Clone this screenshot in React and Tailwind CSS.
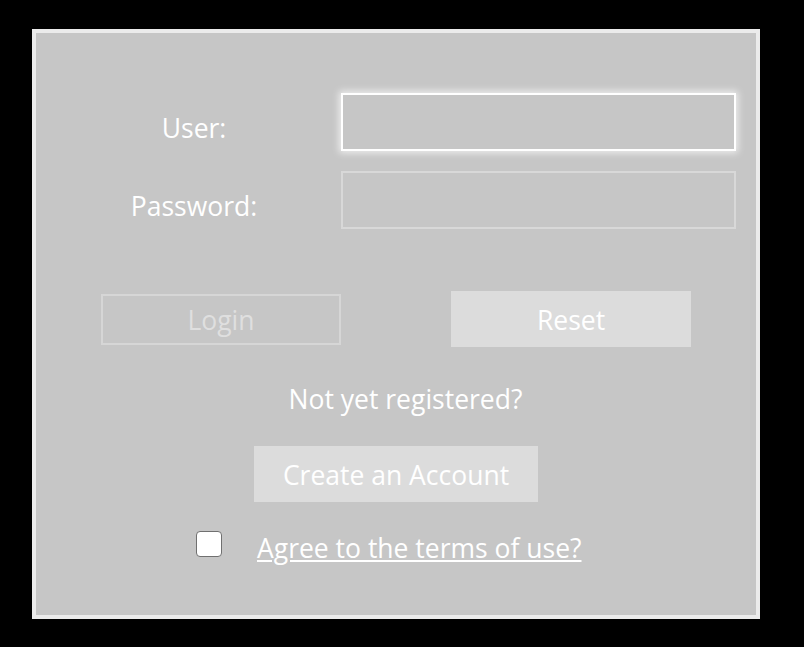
export default function App() {
  const font = { fontFamily: '"Open Sans", "Noto Sans", sans-serif' };
  return (
    <div className="min-h-[647px] w-full bg-black pt-[29px] pl-[32px]" style={font}>
      <div className="w-[728px] h-[590px] border-4 border-[#ebebeb] bg-[#c6c6c6] flex flex-col text-[26.5px] leading-[32px] text-white">
        <div className="flex mt-[60px] h-[58px]">
          <div className="w-[305px] pl-[11px] text-center mt-[19px]">User:</div>
          <div className="w-[395px] h-[58px] border-2 border-white shadow-[0_0_7px_2px_rgba(255,255,255,0.7)]" />
        </div>
        <div className="flex mt-[20px] h-[58px]">
          <div className="w-[305px] pl-[11px] text-center mt-[19px]">Password:</div>
          <div className="w-[395px] h-[58px] border-2 border-[#d8d8d8]" />
        </div>
        <div className="flex items-center mt-[62px] h-[56px] pl-[65px] gap-[110px]">
          <div className="w-[240px] h-[51px] border-2 border-[#d6d6d6] text-[#dfdfdf] flex items-center justify-center pt-[2px]">Login</div>
          <div className="w-[240px] h-[56px] bg-[#dcdcdc] flex items-center justify-center pt-[2px]">Reset</div>
        </div>
        <div className="mt-[36px] text-center pl-[19px]">Not yet registered?</div>
        <div className="flex justify-center mt-[31px]">
          <div className="w-[284px] h-[56px] bg-[#dcdcdc] flex items-center justify-center pt-[2px]">Create an Account</div>
        </div>
        <div className="flex items-start mt-[29px] pl-[160px]">
          <div className="w-[26px] h-[26px] bg-white border border-[#707070] rounded-[4px]" />
          <div className="ml-[35px] mt-[1px] underline">Agree to the terms of use?</div>
        </div>
      </div>
    </div>
  );
}
